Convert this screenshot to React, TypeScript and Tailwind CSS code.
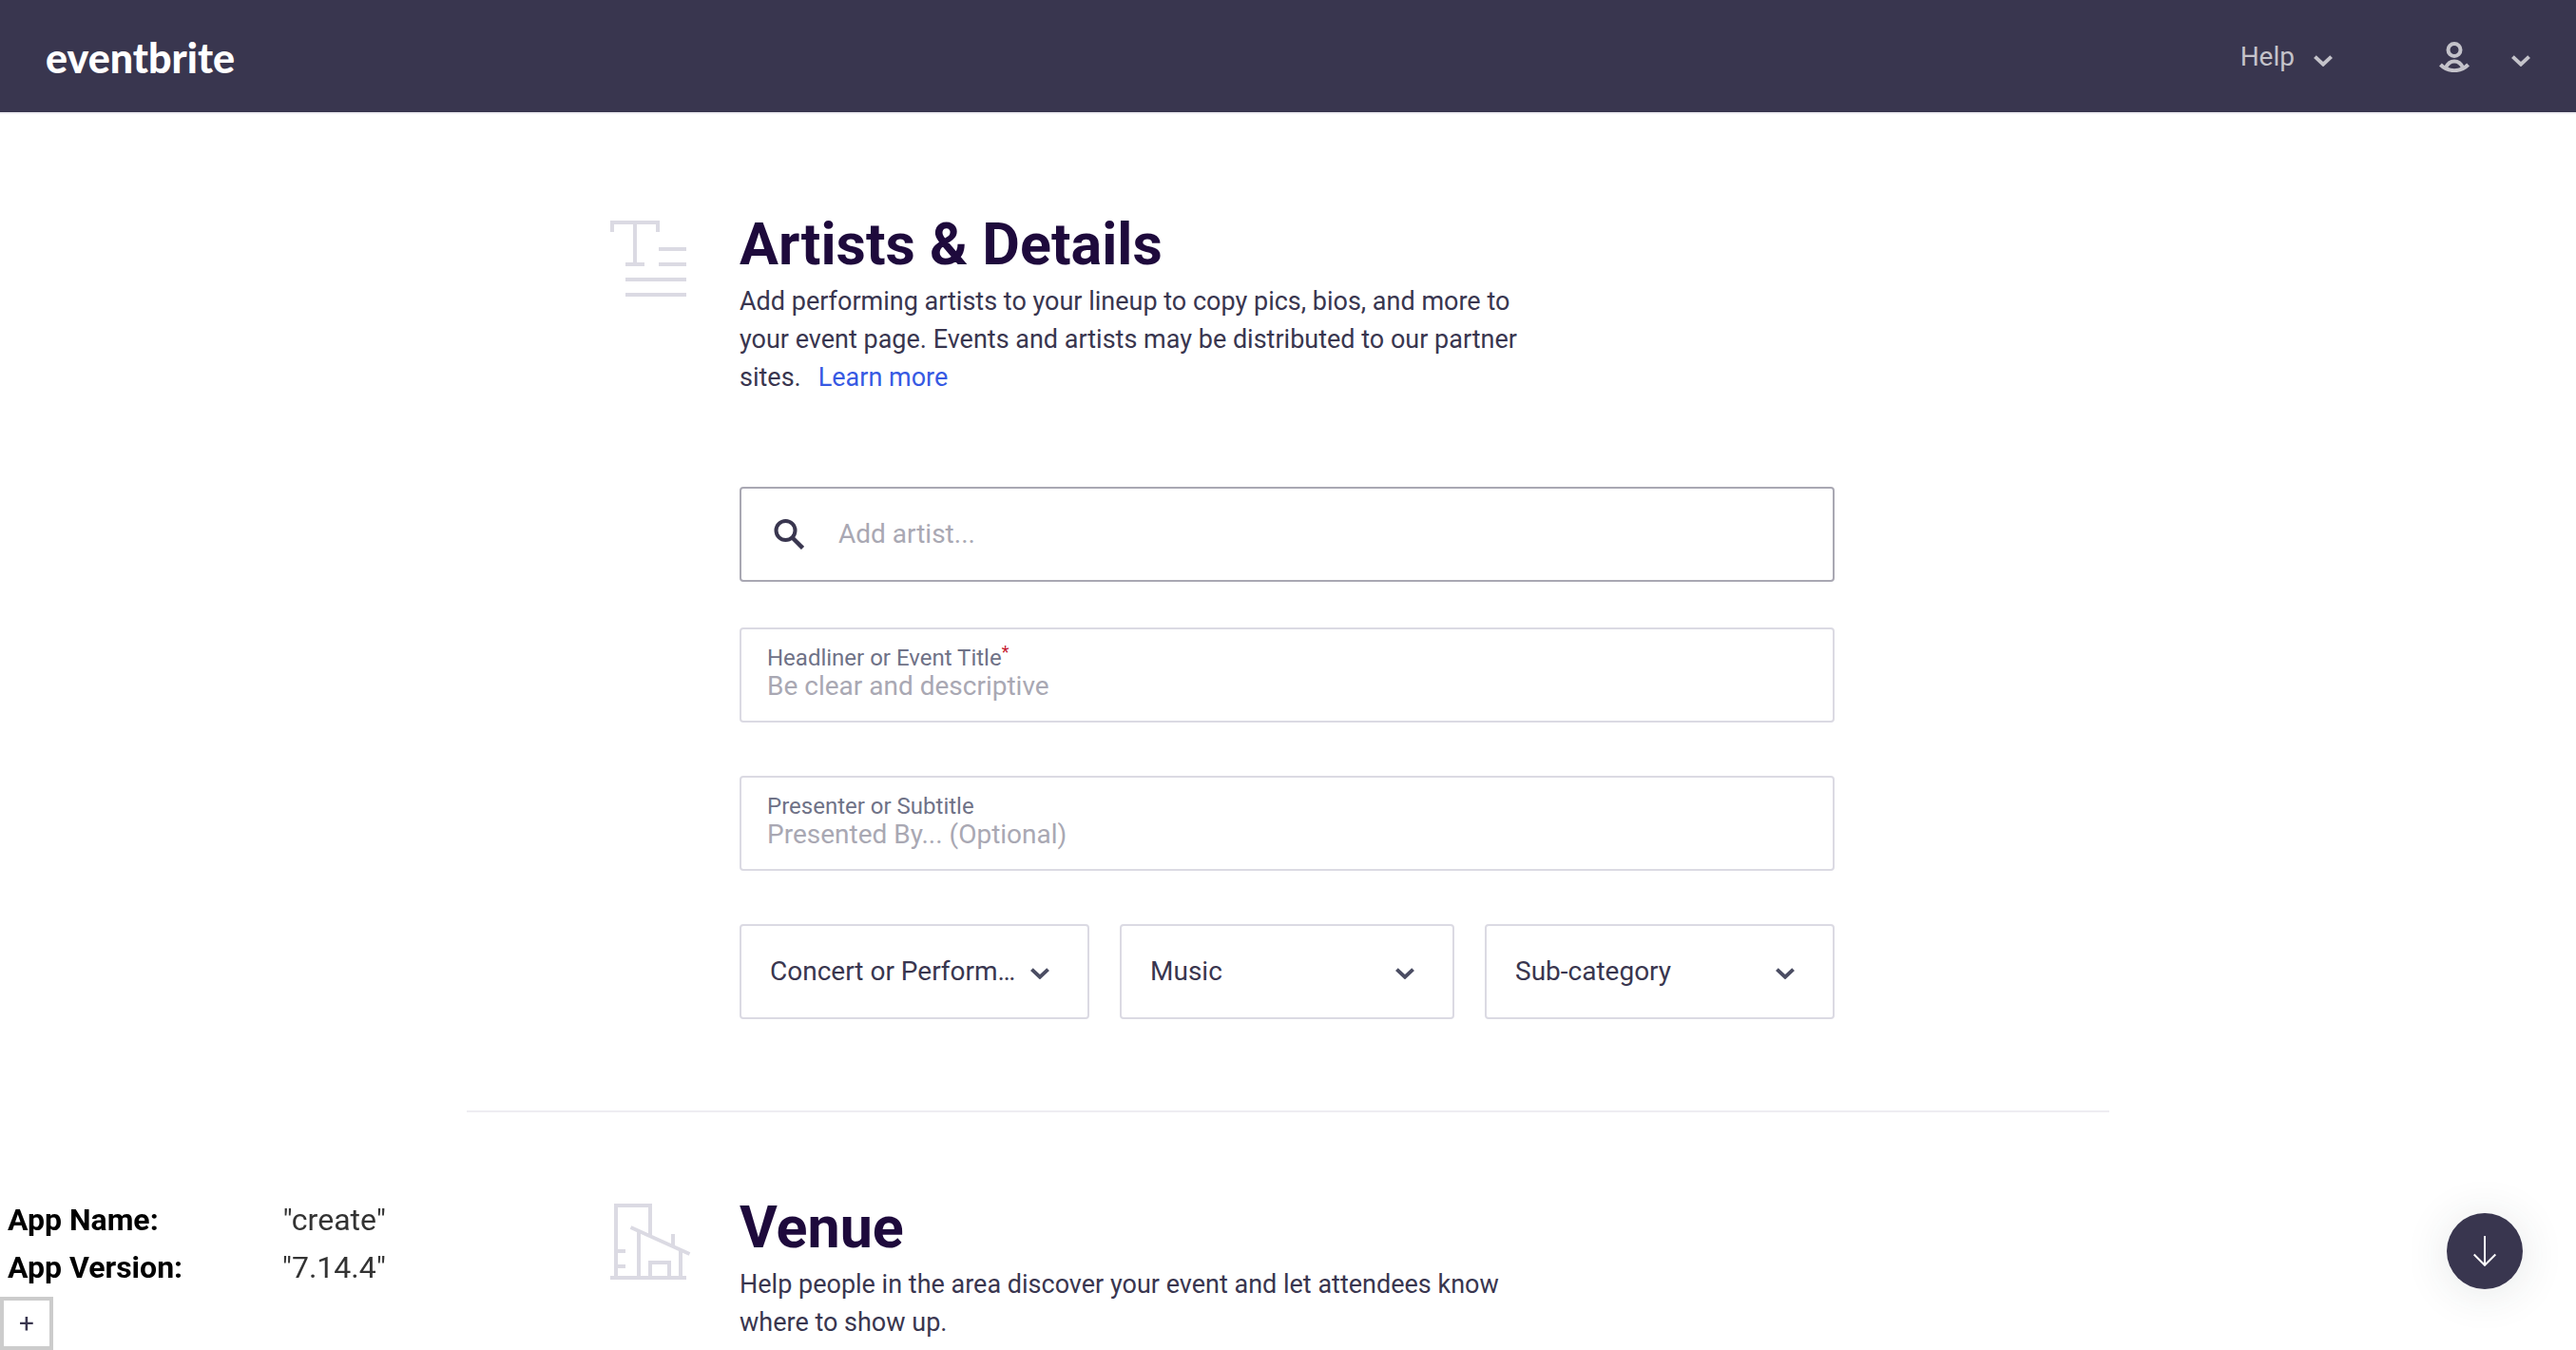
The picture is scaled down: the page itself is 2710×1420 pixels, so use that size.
import type { ReactNode } from "react";

function Chevron({ className = "" }: { className?: string }) {
  return (
    <svg viewBox="0 0 20 12" fill="none" stroke="currentColor" strokeWidth="4" className={"h-3 w-5 shrink-0 " + className} aria-hidden="true">
      <path d="M1.4 1.6 10 9.6l8.6-8" />
    </svg>
  );
}

function UserIcon() {
  return (
    <svg viewBox="0 0 32 32" fill="none" stroke="currentColor" strokeWidth="4" className="size-8" aria-hidden="true">
      <circle cx="16" cy="8.500" r="6.500" />
      <path d="M1.4 24C9.6 32.2 22.4 32.2 30.6 24" />
      <path d="M6.8 27.4C9 22.400 12 20.400 16 20.400s7 2 9.2 7" />
    </svg>
  );
}

function TextIcon() {
  return (
    <svg viewBox="0 0 80 80" fill="none" stroke="currentColor" strokeWidth="4" className="size-20" aria-hidden="true">
      <path d="M2 12V2h48v10M26 2v44M16 46h20M51 30h29M51 46h29M16 62h64M16 78h64" />
    </svg>
  );
}

function VenueIcon() {
  return (
    <svg viewBox="0 0 80 80" fill="none" stroke="currentColor" strokeWidth="4" className="size-20 overflow-visible" aria-hidden="true">
      <path d="M6 78V2h36v32M0 78h80M8 50h8M8 66h8M30 28v50M74 50v28M66 32v14M42 78V62h20v16M21.500 25 83.500 53" />
    </svg>
  );
}

function SearchIcon() {
  return (
    <svg viewBox="0 0 32 32" fill="none" stroke="currentColor" strokeWidth="4" className="size-8 shrink-0" aria-hidden="true">
      <circle cx="12.500" cy="12" r="10" />
      <path d="m19.500 19.500 11 11" strokeWidth="4.500" />
    </svg>
  );
}

function Section({ icon, title, text, children }: { icon: ReactNode; title: string; text: ReactNode; children?: ReactNode }) {
  return (
    <section className="flex gap-14 pt-[89px] pr-[289px] pb-24 pl-[151px]">
      <div className="mt-[7px] shrink-0 text-[#dbdae3]">{icon}</div>
      <div className="min-w-0 flex-1">
        <h2 className="text-[61px] leading-16 font-bold text-[#1e0a3c]">{title}</h2>
        <p className="mt-2 w-3/4 text-[27px] leading-10 text-[#39364f]">{text}</p>
        {children}
      </div>
    </section>
  );
}

function Field({ id, label, placeholder, required }: { id: string; label: string; placeholder: string; required?: boolean }) {
  return (
    <div className="h-[100px] rounded-sm border-2 border-[#dbdae3] px-[27px] pt-4">
      <label htmlFor={id} className="flex items-start text-2xl leading-7 text-[#6f7287]">
        {label}
        {required && <span className="text-lg leading-4 text-[#c5162e]">*</span>}
      </label>
      <input
        id={id}
        placeholder={placeholder}
        className="block h-8 w-full text-[28px] leading-8 text-[#39364f] outline-none placeholder:text-[#a9a8b3]"
      />
    </div>
  );
}

function Select({ label, value }: { label: string; value: string }) {
  return (
    <div className="relative h-[100px] rounded-sm border-2 border-[#dbdae3]">
      <select
        aria-label={label}
        className="size-full appearance-none bg-transparent pr-16 pl-[30px] text-[28px] text-[#39364f] outline-none"
      >
        <option>{value}</option>
      </select>
      <Chevron className="pointer-events-none absolute top-11 right-10 text-[#4b4d63]" />
    </div>
  );
}

export default function App() {
  return (
    <div className="h-screen overflow-hidden bg-white font-['Roboto',sans-serif]">
      <header className="flex h-[120px] items-center justify-between border-b-2 border-[#eeedf2] bg-[#39364f] bg-clip-padding px-12 text-[#c4c3ca]">
        <a href="#" className="mt-1 font-['Lato',sans-serif] text-[43px] leading-12 font-black text-white">
          eventbrite
        </a>
        <nav className="flex items-center pt-0.5">
          <button className="flex items-center gap-5 text-[28px] leading-10">
            Help
            <Chevron className="mt-2" />
          </button>
          <button aria-label="Account" className="ml-28 flex items-center gap-11">
            <UserIcon />
            <Chevron className="mt-2" />
          </button>
        </nav>
      </header>

      <main className="mx-auto max-w-[1728px] pt-4">
        <Section
          icon={<TextIcon />}
          title="Artists & Details"
          text={
            <>
              Add performing artists to your lineup to copy pics, bios, and more to your event page. Events and artists
              may be distributed to our partner sites.
              <a href="#" className="ml-[18px] text-[#3659e3]">
                Learn more
              </a>
            </>
          }
        >
          <form className="mt-[95px]">
            <div className="flex h-[100px] items-center gap-9 rounded-sm border-2 border-[#a9a8b3] px-[34px] text-[#39364f]">
              <SearchIcon />
              <input
                aria-label="Add artist"
                placeholder="Add artist..."
                className="h-10 min-w-0 flex-1 text-[28px] leading-10 outline-none placeholder:text-[#a9a8b3]"
              />
            </div>
            <div className="mt-12 flex flex-col gap-14">
              <Field id="title" label="Headliner or Event Title" placeholder="Be clear and descriptive" required />
              <Field id="subtitle" label="Presenter or Subtitle" placeholder="Presented By... (Optional)" />
              <div className="grid grid-cols-[23fr_22fr_23fr] gap-8">
                <Select label="Type" value="Concert or Perform…" />
                <Select label="Category" value="Music" />
                <Select label="Sub-category" value="Sub-category" />
              </div>
            </div>
          </form>
        </Section>
        <hr className="border-t-2 border-[#eeedf2]" />
        <Section
          icon={<VenueIcon />}
          title="Venue"
          text="Help people in the area discover your event and let attendees know where to show up."
        />
      </main>

      <aside className="fixed bottom-0 left-0 w-[406px]">
        <dl className="pl-2 text-[32px] leading-[50px]">
          <div className="flex justify-between">
            <dt className="font-bold text-black">App Name:</dt>
            <dd className="text-[#333333]">"create"</dd>
          </div>
          <div className="flex justify-between">
            <dt className="font-bold text-black">App Version:</dt>
            <dd className="text-[#333333]">"7.14.4"</dd>
          </div>
        </dl>
        <button className="mt-1.5 flex size-14 items-center justify-center border-4 border-[#cccccc] bg-white text-[28px] leading-8 text-[#39364f]">
          +
        </button>
      </aside>

      <button
        aria-label="Scroll down"
        className="fixed right-14 bottom-16 flex size-20 items-center justify-center rounded-full bg-[#39364f] text-white shadow-[0_4px_48px_rgba(40,60,55,0.12)]"
      >
        <svg viewBox="0 0 24 32" fill="none" stroke="currentColor" strokeWidth="2" className="h-8 w-6" aria-hidden="true">
          <path d="M12 0v31M.7 19.500 12 30.800l11.300-11.300" />
        </svg>
      </button>
    </div>
  );
}
